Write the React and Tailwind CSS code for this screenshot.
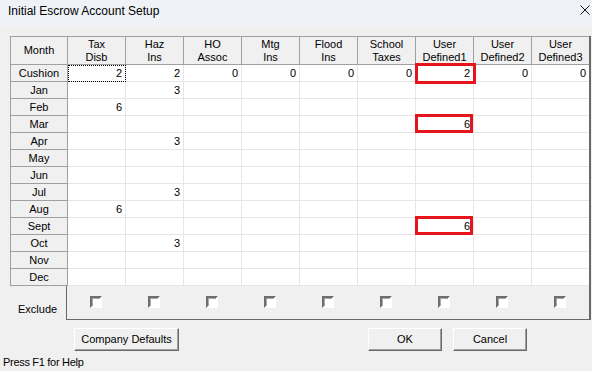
import React from "react";

const cols = [
  ["Tax", "Disb"],
  ["Haz", "Ins"],
  ["HO", "Assoc"],
  ["Mtg", "Ins"],
  ["Flood", "Ins"],
  ["School", "Taxes"],
  ["User", "Defined1"],
  ["User", "Defined2"],
  ["User", "Defined3"],
];

const rows = [
  ["Cushion", [2, 2, 0, 0, 0, 0, 2, 0, 0]],
  ["Jan", { 1: 3 }],
  ["Feb", { 0: 6 }],
  ["Mar", { 6: 6 }],
  ["Apr", { 1: 3 }],
  ["May", {}],
  ["Jun", {}],
  ["Jul", { 1: 3 }],
  ["Aug", { 0: 6 }],
  ["Sept", { 6: 6 }],
  ["Oct", { 1: 3 }],
  ["Nov", {}],
  ["Dec", {}],
];

const red = {
  "Cushion-6": "left-[-1px] top-[-2px] right-[-3px] bottom-[-3px]",
  "Mar-6": "left-[-1px] top-[-2px] right-[0px] bottom-[-1px]",
  "Sept-6": "left-[-1px] top-[-2px] right-[0px] bottom-[-1px]",
};

function Checkbox() {
  return (
    <div className="w-[12px] h-[12px] bg-white border-2 border-t-[#6e6e6e] border-l-[#6e6e6e] border-r-white border-b-white shadow-[inset_1px_1px_0_#a8a8a8]" />
  );
}

function Button({ children, className }) {
  return (
    <div
      className={
        "h-[23px] flex items-center justify-center bg-[#f0f0f0] border border-t-white border-l-white border-r-[#696969] border-b-[#696969] shadow-[inset_-1px_-1px_0_#a0a0a0] text-[11px] text-black " +
        className
      }
    >
      {children}
    </div>
  );
}

export default function App() {
  return (
    <div className="w-[592px] h-[371px] bg-[#f0f0f0] overflow-hidden font-['Liberation_Sans',Arial,sans-serif] text-black">
      {/* Title bar */}
      <div className="h-[26px] bg-[#eff3f8] relative">
        <div className="h-[22px] flex items-center pl-[8px] text-[12px] text-black">
          Initial Escrow Account Setup
        </div>
        <svg
          className="absolute left-[580px] top-[5px]"
          width="10"
          height="10"
          viewBox="0 0 10 10"
        >
          <path d="M0.5 0.5 L9.5 9.5 M9.5 0.5 L0.5 9.5" stroke="#111" strokeWidth="1" />
        </svg>
      </div>

      <div className="pt-[10px]">
        <div className="ml-[10px] w-[581px] border-r-2 border-[#696969]">
          {/* Grid */}
          <div className="grid grid-cols-[58px_repeat(8,58px)_57px] text-[11px] leading-[13px]">
            <div className="h-[29px] bg-[#f0f0f0] border-t border-l border-r border-b border-[#a0a0a0] flex items-center justify-center">
              Month
            </div>
            {cols.map((c, i) => (
              <div
                key={i}
                className={
                  "h-[29px] bg-[#f0f0f0] border-t border-b border-[#a0a0a0] flex flex-col items-center justify-center text-center " +
                  (i === 8 ? "" : "border-r")
                }
              >
                <div>{c[0]}</div>
                <div>{c[1]}</div>
              </div>
            ))}
            {rows.map(([m, vals]) => (
              <React.Fragment key={m}>
                <div className="h-[17px] bg-[#f0f0f0] border-l border-r border-b border-[#a0a0a0] flex items-center justify-center">
                  {m}
                </div>
                {cols.map((_, i) => {
                  const v = vals[i];
                  const rk = red[m + "-" + i];
                  return (
                    <div
                      key={i}
                      className={
                        "h-[17px] bg-white border-b border-[#e6e6e6] flex items-center justify-end pr-[3px] relative " +
                        (i === 8 ? "" : "border-r ") +
                        (rk ? "z-10" : "")
                      }
                    >
                      {v !== undefined ? v : ""}
                      {m === "Cushion" && i === 0 && (
                        <div className="absolute left-[0px] top-[0px] right-[-1px] bottom-[-1px] border border-dotted border-black" />
                      )}
                      {rk && (
                        <div className={"absolute border-[3px] border-[#e8141c] " + rk} />
                      )}
                    </div>
                  );
                })}
              </React.Fragment>
            ))}
          </div>

          {/* Exclude row */}
          <div className="flex h-[34px]">
            <div className="w-[58px] text-[11px] leading-[13px] pt-[17px] pl-[8px]">Exclude</div>
            <div className="flex-1 border-l border-b border-[#696969] flex">
              {cols.map((_, i) => (
                <div key={i} className="w-[58px] flex justify-center pt-[10px]">
                  <Checkbox />
                </div>
              ))}
            </div>
          </div>
        </div>

        {/* Buttons */}
        <div className="flex mt-[8px]">
          <Button className="ml-[74px] w-[105px]">Company Defaults</Button>
          <Button className="ml-[189px] w-[74px]">OK</Button>
          <Button className="ml-[11px] w-[74px]">Cancel</Button>
        </div>

        <div className="mt-[5px] pl-[3px] text-[11px] leading-[13px] tracking-[-0.3px]">
          Press F1 for Help
        </div>
      </div>
    </div>
  );
}
